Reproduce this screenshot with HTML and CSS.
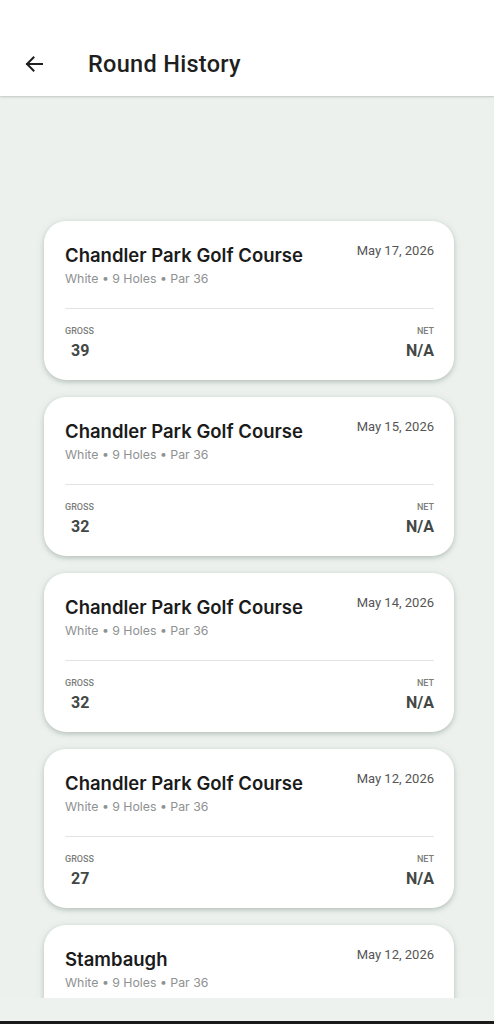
FILE: index.html
```html
<!DOCTYPE html>
<html>
<head>
<meta charset="utf-8">
<link rel="stylesheet" href="styles.css">
</head>
<body>
<div class="app">
  <header class="topbar">
    <svg class="back" width="24" height="24" viewBox="0 0 24 24"><path d="M20 12H5M11.5 5.5L5 12l6.5 6.5" fill="none" stroke="#1f1f1f" stroke-width="2" stroke-linecap="square"/></svg>
    <h1 class="title">Round History</h1>
  </header>
  <main class="list">
    <div class="card">
      <div class="card-top">
        <div class="info">
          <div class="course">Chandler Park Golf Course</div>
          <div class="meta">White • 9 Holes • Par 36</div>
        </div>
        <div class="date">May 17, 2026</div>
      </div>
      <div class="divider"></div>
      <div class="scores">
        <div class="score"><div class="label">GROSS</div><div class="value gross">39</div></div>
        <div class="score right"><div class="label">NET</div><div class="value">N/A</div></div>
      </div>
    </div>
    <div class="card">
      <div class="card-top">
        <div class="info">
          <div class="course">Chandler Park Golf Course</div>
          <div class="meta">White • 9 Holes • Par 36</div>
        </div>
        <div class="date">May 15, 2026</div>
      </div>
      <div class="divider"></div>
      <div class="scores">
        <div class="score"><div class="label">GROSS</div><div class="value gross">32</div></div>
        <div class="score right"><div class="label">NET</div><div class="value">N/A</div></div>
      </div>
    </div>
    <div class="card">
      <div class="card-top">
        <div class="info">
          <div class="course">Chandler Park Golf Course</div>
          <div class="meta">White • 9 Holes • Par 36</div>
        </div>
        <div class="date">May 14, 2026</div>
      </div>
      <div class="divider"></div>
      <div class="scores">
        <div class="score"><div class="label">GROSS</div><div class="value gross">32</div></div>
        <div class="score right"><div class="label">NET</div><div class="value">N/A</div></div>
      </div>
    </div>
    <div class="card">
      <div class="card-top">
        <div class="info">
          <div class="course">Chandler Park Golf Course</div>
          <div class="meta">White • 9 Holes • Par 36</div>
        </div>
        <div class="date">May 12, 2026</div>
      </div>
      <div class="divider"></div>
      <div class="scores">
        <div class="score"><div class="label">GROSS</div><div class="value gross">27</div></div>
        <div class="score right"><div class="label">NET</div><div class="value">N/A</div></div>
      </div>
    </div>
    <div class="card">
      <div class="card-top">
        <div class="info">
          <div class="course">Stambaugh</div>
          <div class="meta">White • 9 Holes • Par 36</div>
        </div>
        <div class="date">May 12, 2026</div>
      </div>
    </div>
  </main>
  <div class="navspace"></div>
  <div class="navline"></div>
</div>
</body>
</html>
```

FILE: styles.css
```css
* { box-sizing: border-box; }
html, body { margin: 0; padding: 0; }
body {
  width: 494px;
  height: 1024px;
  overflow: hidden;
  background: #ecf1ee;
  font-family: Roboto, "Noto Sans", sans-serif;
}
.app {
  display: flex;
  flex-direction: column;
  height: 1024px;
}
.topbar {
  height: 96px;
  flex: 0 0 96px;
  background: #ffffff;
  display: flex;
  align-items: center;
  padding: 32px 0 0 22px;
  box-shadow: 0 1px 3px rgba(0,0,0,0.12), 0 1px 1px rgba(0,0,0,0.06);
  position: relative;
  z-index: 2;
}
.back { display: block; }
.title {
  margin: 0 0 0 42px;
  font-family: Roboto, sans-serif;
  font-weight: 500;
  font-size: 23.5px;
  color: #1f1f1f;
  letter-spacing: 0.3px;
}
.list {
  flex: 0 0 902px;
  height: 902px;
  overflow: hidden;
  padding: 125px 40px 0 44px;
  display: flex;
  flex-direction: column;
  gap: 17px;
}
.card {
  flex: 0 0 159px;
  background: #ffffff;
  border-radius: 22px;
  padding: 21px 20px 0 21px;
  box-shadow: 0 2px 4px rgba(60,80,70,0.22), 0 1px 8px rgba(60,80,70,0.10);
}
.card-top {
  display: flex;
  justify-content: space-between;
  align-items: flex-start;
}
.course {
  font-family: Inter, sans-serif;
  font-weight: 600;
  font-size: 18.5px;
  color: #1b1b1b;
  line-height: 26px;
}
.meta {
  font-family: Inter, sans-serif;
  font-size: 12.3px;
  color: #8e918f;
  margin-top: 2px;
  line-height: 18px;
}
.date {
  font-size: 13px;
  color: #555;
  line-height: 18px;
  margin-top: 0;
}
.divider {
  height: 1px;
  background: #e3e5e4;
  margin-top: 20px;
}
.scores {
  display: flex;
  justify-content: space-between;
  margin-top: 16px;
}
.score { display: flex; flex-direction: column; }
.score.right { align-items: flex-end; }
.label {
  font-size: 9px;
  font-weight: 500;
  color: #7b7e7c;
  line-height: 12px;
}
.value {
  font-size: 16px;
  font-weight: 700;
  color: #434846;
  line-height: 20px;
  margin-top: 4px;
}
.value.gross { padding-left: 6px; }
.navspace {
  flex: 0 0 23px;
  background: #edf2ef;
}
.navline {
  flex: 0 0 3px;
  background: #1a1a1a;
}
```
